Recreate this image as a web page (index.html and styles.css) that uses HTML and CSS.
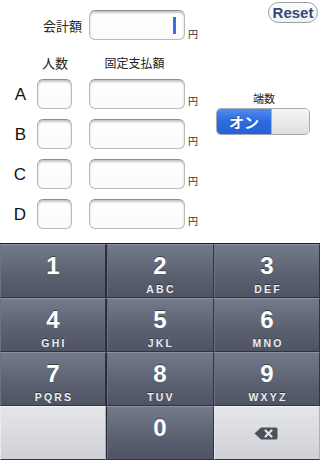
FILE: index.html
```html
<!DOCTYPE html>
<html lang="ja">
<head>
<meta charset="utf-8">
<link rel="stylesheet" href="styles.css">
</head>
<body>
<div class="screen">
  <div class="form">
    <div class="total-label">会計額</div>
    <div class="field big total"><span class="cursor"></span></div>
    <div class="yen y1">円</div>
    <button class="reset">Reset</button>

    <div class="head head-count">人数</div>
    <div class="head head-fixed">固定支払額</div>

    <div class="letter ra">A</div>
    <div class="field small ra"></div>
    <div class="field big ra"></div>
    <div class="yen ra">円</div>

    <div class="letter rb">B</div>
    <div class="field small rb"></div>
    <div class="field big rb"></div>
    <div class="yen rb">円</div>

    <div class="letter rc">C</div>
    <div class="field small rc"></div>
    <div class="field big rc"></div>
    <div class="yen rc">円</div>

    <div class="letter rd">D</div>
    <div class="field small rd"></div>
    <div class="field big rd"></div>
    <div class="yen rd">円</div>

    <div class="rounding">
      <div class="rounding-label">端数</div>
      <div class="switch"><span class="on">オン</span><span class="knob"></span></div>
    </div>
  </div>

  <div class="keyboard">
    <div class="key"><span class="digit">1</span></div>
    <div class="key"><span class="digit">2</span><span class="letters">ABC</span></div>
    <div class="key"><span class="digit">3</span><span class="letters">DEF</span></div>
    <div class="key"><span class="digit">4</span><span class="letters">GHI</span></div>
    <div class="key"><span class="digit">5</span><span class="letters">JKL</span></div>
    <div class="key"><span class="digit">6</span><span class="letters">MNO</span></div>
    <div class="key"><span class="digit">7</span><span class="letters">PQRS</span></div>
    <div class="key"><span class="digit">8</span><span class="letters">TUV</span></div>
    <div class="key"><span class="digit">9</span><span class="letters">WXYZ</span></div>
    <div class="key light"></div>
    <div class="key"><span class="digit">0</span></div>
    <div class="key light del">
      <svg width="24" height="13" viewBox="0 0 24 13">
        <path d="M7 0.5 H22 Q23.5 0.5 23.5 2 V11 Q23.5 12.5 22 12.5 H7 L0.5 6.5 Z" fill="#4b505a"/>
        <path d="M11.5 3.5 L17.5 9.5 M17.5 3.5 L11.5 9.5" stroke="#e4e5e9" stroke-width="2.2" stroke-linecap="round"/>
      </svg>
    </div>
  </div>
</div>
</body>
</html>
```

FILE: styles.css
```css
* { box-sizing: border-box; }
html, body { margin: 0; padding: 0; }
body {
  width: 320px;
  height: 460px;
  overflow: hidden;
  background: #ffffff;
  font-family: "Liberation Sans", Arial, "Noto Sans CJK JP", sans-serif;
}
.screen { display: flex; flex-direction: column; height: 460px; }

.form {
  height: 243px;
  display: grid;
  grid-template-columns: 37px 35px 17px 96px 31px 94px 10px;
  grid-template-rows: 30px 39px 30px 10px 30px 10px 30px 10px 30px;
  padding-top: 10px;
}

.total-label {
  grid-column: 1 / 4;
  grid-row: 1;
  justify-self: end;
  align-self: center;
  padding-right: 7px;
  font-size: 13px;
  color: #222;
  font-family: "Noto Sans CJK JP", sans-serif;
}

.field {
  border: 1px solid #b9b9b9;
  border-top-color: #8e8e8e;
  border-radius: 6px;
  background: linear-gradient(#ffffff, #fbfbfb);
  box-shadow: inset 0 2px 2px rgba(0,0,0,0.22), 0 1px 0 rgba(255,255,255,0.8);
}
.field.small { grid-column: 2; }
.field.big { grid-column: 4; }
.field.total { grid-row: 1; position: relative; }
.cursor {
  position: absolute;
  right: 8px;
  top: 6px;
  width: 3px;
  height: 17px;
  background: #3b6ee6;
}

.yen {
  grid-column: 5;
  align-self: end;
  padding-left: 3px;
  margin-bottom: 3px;
  font-size: 10px;
  line-height: 11px;
  color: #333;
  font-family: "Noto Sans CJK JP", sans-serif;
}
.y1 { grid-row: 1; margin-bottom: 1px; }

.reset {
  grid-column: 6 / 8;
  grid-row: 1;
  justify-self: end;
  align-self: start;
  margin: -8px 2px 0 0;
  width: 50px;
  height: 21px;
  padding: 0;
  border: 1px solid #9a9ca3;
  border-radius: 11px;
  background: linear-gradient(#ffffff, #f1f2f4);
  color: #34497a;
  font-family: "Liberation Sans", Arial, sans-serif;
  font-weight: bold;
  font-size: 15px;
  line-height: 19px;
}

.head {
  grid-row: 2;
  align-self: center;
  font-size: 12px;
  color: #222;
  font-family: "Noto Sans CJK JP", sans-serif;
  margin-top: 6px;
}
.head-count { grid-column: 1 / 3; justify-self: end; padding-right: 4px; font-size: 13px; }
.head-fixed { grid-column: 4; justify-self: center; margin-left: -5px; }

.letter {
  grid-column: 1;
  justify-self: end;
  align-self: center;
  padding-right: 11px;
  font-size: 17px;
  color: #111;
  margin-top: 2px;
}
.ra { grid-row: 3; }
.rb { grid-row: 5; }
.rc { grid-row: 7; }
.rd { grid-row: 9; }

.rounding {
  grid-column: 6;
  grid-row: 3 / 6;
  display: flex;
  flex-direction: column;
  align-items: center;
  padding-top: 12px;
}
.rounding-label {
  font-size: 11px;
  line-height: 14px;
  color: #222;
  font-family: "Noto Sans CJK JP", sans-serif;
  margin-left: 2px;
}
.switch {
  margin-top: 3px;
  width: 94px;
  height: 27px;
  border-radius: 5px;
  border: 1px solid #a8a9ad;
  display: flex;
  overflow: hidden;
}
.switch .on {
  flex: 0 0 54px;
  background: linear-gradient(#4f8cf0, #2d6ade 50%, #2462d8);
  color: #fff;
  font-family: "Noto Sans CJK JP", sans-serif;
  font-weight: bold;
  font-size: 15px;
  line-height: 25px;
  text-align: center;
  text-shadow: 0 -1px 0 rgba(0,0,0,0.3);
}
.switch .knob {
  flex: 1;
  border-left: 1px solid #b0b0b4;
  background: linear-gradient(#f6f6f6, #dedede);
}

.keyboard {
  height: 217px;
  border-top: 1px solid #1d1f24;
  display: grid;
  grid-template-columns: 106px 108px 106px;
  grid-template-rows: repeat(4, 54px);
  background: #2f333b;
}
.key {
  display: flex;
  flex-direction: column;
  align-items: center;
  padding-top: 9px;
  background: linear-gradient(#737a89, #5a6070 60%, #4e5463);
  border-top: 1px solid #8a909d;
  border-bottom: 1px solid #30343c;
  border-left: 1px solid #6c7280;
  border-right: 1px solid #30343c;
  color: #fff;
}
.key:nth-child(3n+2) { border-left: 1px solid #262a31; box-shadow: inset 1px 0 0 #6a7180; }
.digit {
  font-weight: bold;
  font-size: 24px;
  line-height: 24px;
  text-shadow: 0 -1px 0 rgba(0,0,0,0.45);
}
.letters {
  margin-top: 5px;
  font-weight: bold;
  font-size: 10.5px;
  line-height: 12px;
  letter-spacing: 2.2px;
  padding-left: 2px;
  color: #eceef2;
  text-shadow: 0 -1px 0 rgba(0,0,0,0.45);
}
.key.light {
  background: linear-gradient(#e4e5e9, #cfd1d6);
  border-top: 1px solid #f2f3f5;
  border-left: 1px solid #e9eaed;
  border-right: 1px solid #aeb1b8;
}
.key.del { justify-content: center; padding-top: 0; padding-right: 2px; }
```
